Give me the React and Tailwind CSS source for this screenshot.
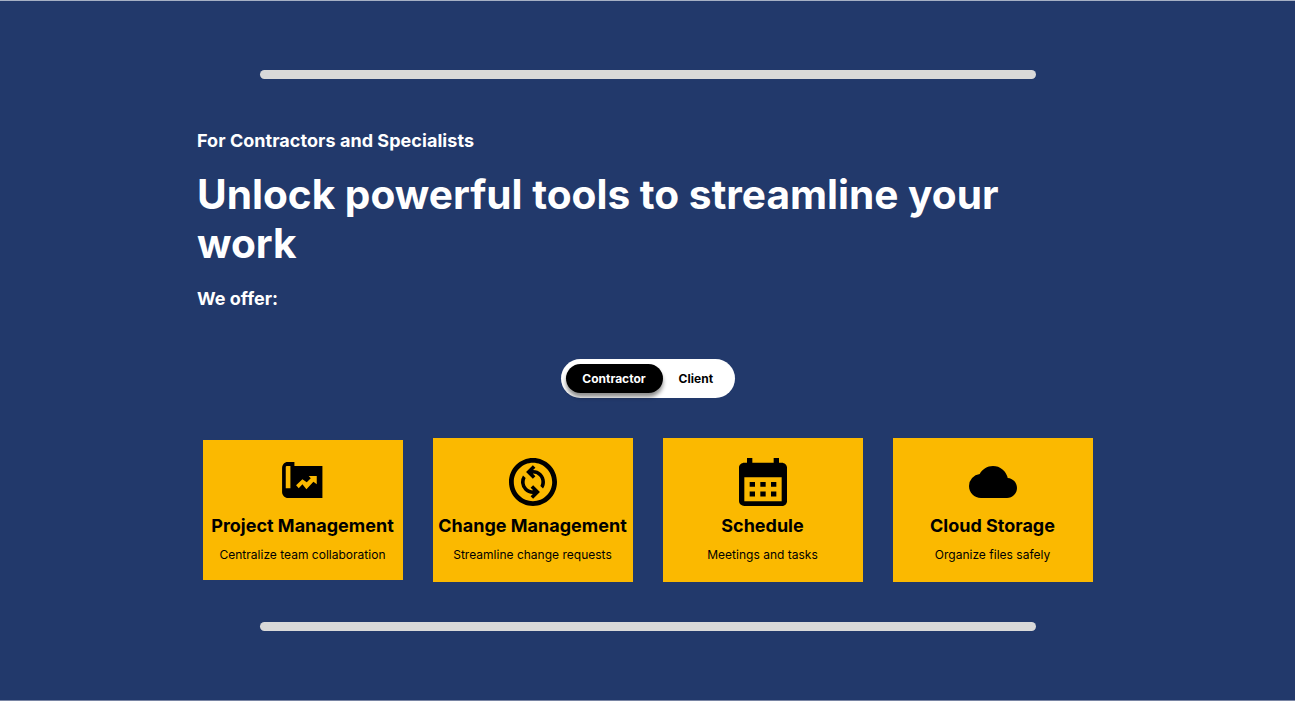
import { MdCalendarMonth, MdCloud, MdOutlineChangeCircle } from "react-icons/md";

function PlanIcon() {
  return (
    <svg className="mb-1 h-9 w-[40.5px]" viewBox="0 0 121 108" fill="#000">
      <path
        fillRule="evenodd"
        d="M17 0H37V12H121V108H18C8 108 0 100 0 90V18C0 8 7 0 17 0ZM11 15V79H25V12H14Q11 12 11 15ZM80 42L86 49L74 61L61 52L42 70L50 79L61 67L73 82L94 59L104 67V42Z"
      />
    </svg>
  );
}

const features = [
  {
    title: "Project Management",
    text: "Centralize team collaboration",
    icon: <PlanIcon />,
    size: "h-[140px] pt-[18px]",
  },
  {
    title: "Change Management",
    text: "Streamline change requests",
    icon: <MdOutlineChangeCircle viewBox="2 2 20 20" className="size-12" />,
    size: "h-36 pt-5",
  },
  {
    title: "Schedule",
    text: "Meetings and tasks",
    icon: <MdCalendarMonth viewBox="3 2 18 20" preserveAspectRatio="none" className="size-12" />,
    size: "h-36 pt-5",
  },
  {
    title: "Cloud Storage",
    text: "Organize files safely",
    icon: <MdCloud viewBox="0 4 24 16" className="h-8 w-12" />,
    size: "h-36 pt-5",
  },
];

function Feature({ title, text, icon, size }) {
  return (
    <article className={`flex w-[200px] flex-col items-center bg-[#fbb900] text-black ${size}`}>
      <div className="flex h-12 items-center justify-center">{icon}</div>
      <h2 className="mt-2 text-lg leading-6 font-bold whitespace-nowrap">{title}</h2>
      <p className="mt-[9px] text-xs leading-4 tracking-[0.01px] whitespace-nowrap">{text}</p>
    </article>
  );
}

export default function App() {
  return (
    <main className="flex h-[701px] w-full flex-col items-center border-t border-b border-t-[#a6b0c4] border-b-[#7985a4] bg-[#22396b] font-['Inter',sans-serif]">
      <div className="mt-[69px] h-[9px] w-[776px] rounded-full bg-[#d9d9d9]" />
      <header className="mt-[50px] w-[901px] text-white">
        <p className="text-lg leading-6 font-bold tracking-[0.05px]">For Contractors and Specialists</p>
        <h1 className="mt-[17px] text-[40.6px] leading-[49px] font-bold">
          Unlock powerful tools to streamline your work
        </h1>
        <p className="mt-[19px] text-lg leading-6 font-bold">We offer:</p>
      </header>
      <div className="mt-12 flex h-[39px] w-[174px] items-center rounded-full bg-white pl-[5px] text-xs font-bold">
        <button className="h-[29px] w-[97px] rounded-full bg-black text-white shadow-[0_4px_4px_rgba(0,0,0,0.45)]">
          Contractor
        </button>
        <button className="ml-4 tracking-[0.05px] text-black">Client</button>
      </div>
      <section className="mt-10 flex h-36 items-center gap-[30px]">
        {features.map((feature) => (
          <Feature key={feature.title} {...feature} />
        ))}
      </section>
      <div className="mt-10 h-[9px] w-[776px] rounded-full bg-[#d9d9d9]" />
    </main>
  );
}
